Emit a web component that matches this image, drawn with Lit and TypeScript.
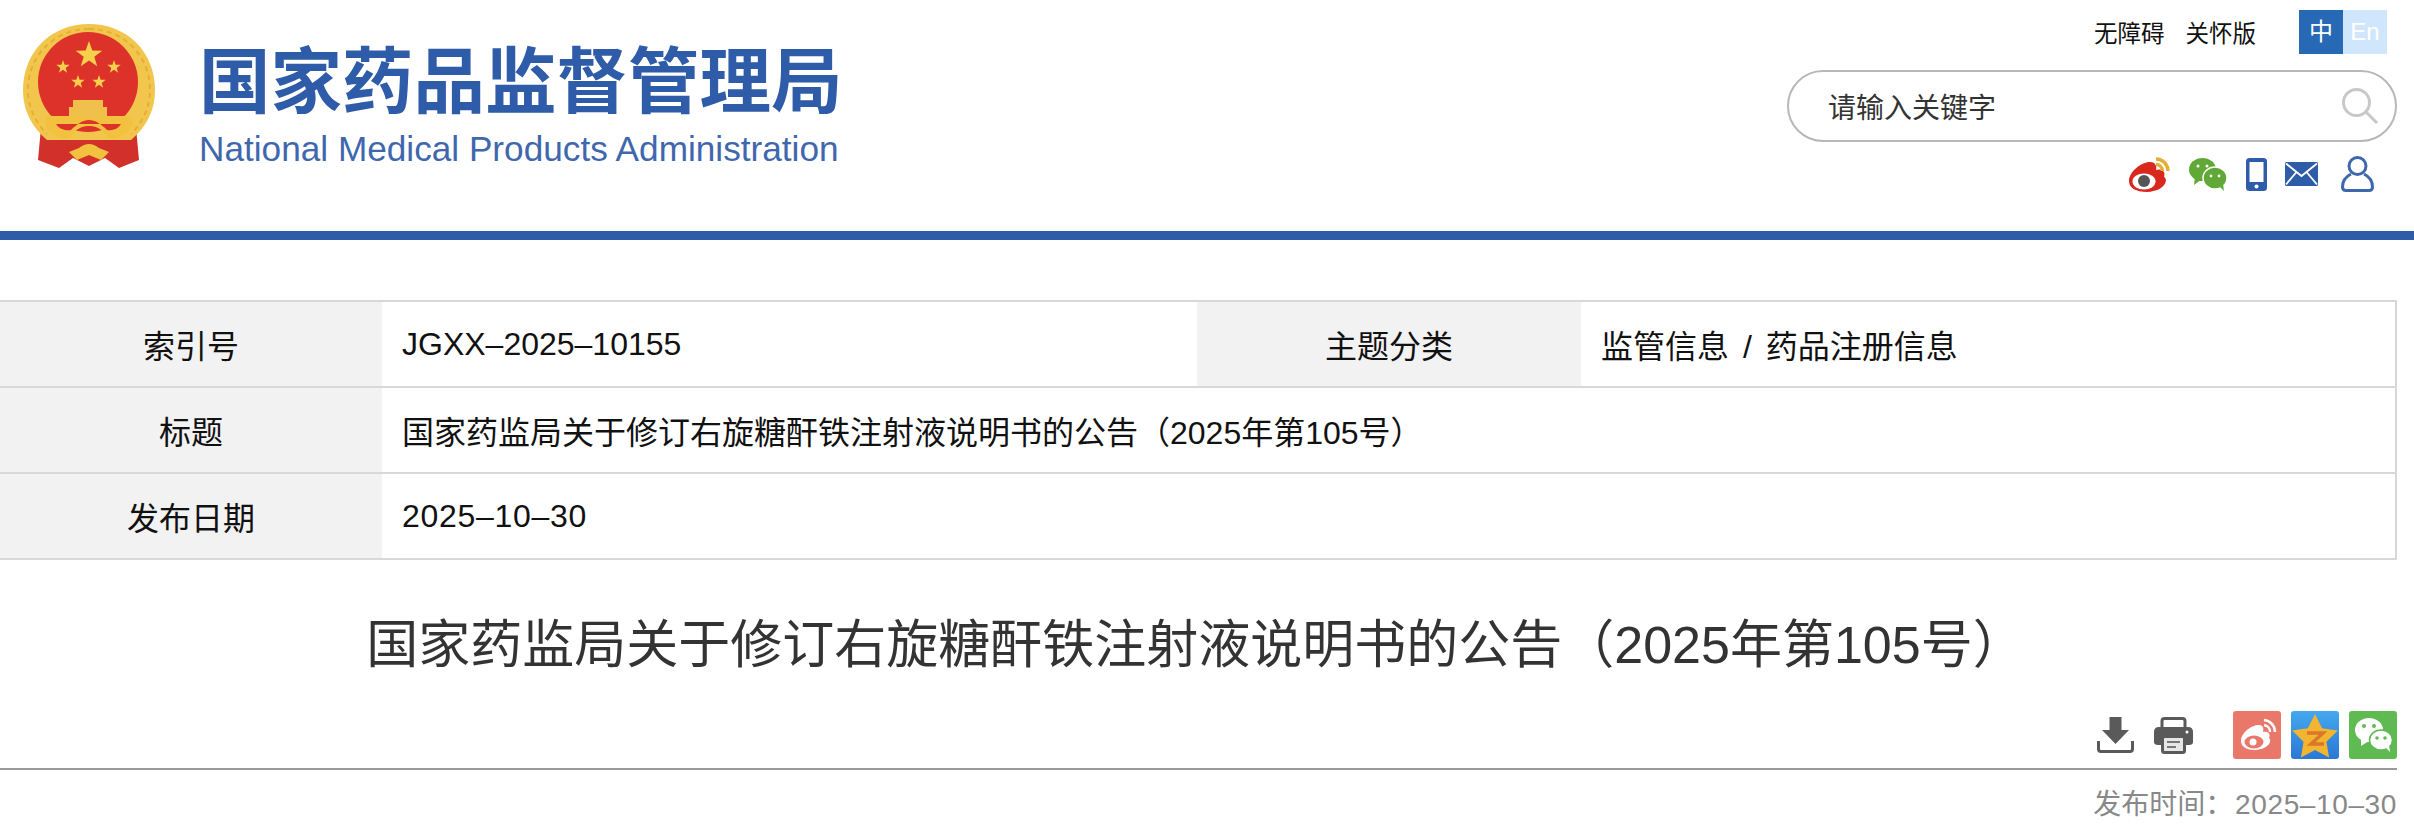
import { LitElement, html, css, svg } from 'lit';
import { customElement } from 'lit/decorators.js';

const star = (cx: number, cy: number, r: number, fill = '#f6d04d', inner = 0.4) => {
  const pts: string[] = [];
  for (let i = 0; i < 10; i++) {
    const rad = i % 2 ? r * inner : r;
    const a = -Math.PI / 2 + (i * Math.PI) / 5;
    pts.push(`${(cx + rad * Math.cos(a)).toFixed(1)},${(cy + rad * Math.sin(a)).toFixed(1)}`);
  }
  return svg`<polygon points=${pts.join(' ')} fill=${fill} />`;
};

const emblem = html`<svg class="emblem" width="132" height="144" viewBox="0 0 132 144">
  <path d="M18 104 L15 136 L36 144 L50 134 L66 142 L82 134 L96 144 L116 136 L113 104 Z" fill="#d2302a" />
  <path d="M66 0 C104 0 132 28 132 66 C132 88 122 104 108 116 H24 C10 104 0 88 0 66 C0 28 28 0 66 0 Z" fill="#f2c64c" />
  <path d="M66 5 C100 5 127 31 127 66 C127 84 119 99 108 110 M66 5 C32 5 5 31 5 66 C5 84 13 99 24 110" fill="none" stroke="#e5ae35" stroke-width="2" stroke-dasharray="5 4" />
  <circle cx="65" cy="58" r="50" fill="#dd3229" />
  ${star(66, 31, 14)} ${star(40, 43, 7)} ${star(91, 43, 7)} ${star(55, 58, 7)} ${star(76, 58, 7)}
  <path d="M50 76 H80 V83 H84 V92 H46 V83 H50 Z" fill="#f0c04c" />
  <path d="M24 92 H108 C112 100 108 108 98 112 C92 116 88 116 84 112 C78 104 72 102 66 102 C60 102 54 104 48 112 C44 116 40 116 34 112 C24 108 20 100 24 92 Z" fill="#f2c13f" />
  <path d="M33 100 H98 C95 105 90 107 84 106 C78 100 72 96 66 96 C60 96 54 100 48 106 C42 107 36 105 33 100 Z" fill="#dd3229" />
  <path d="M46 128 L56 124 Q66 116 76 124 L86 128 L78 136 L66 131 L54 136 Z" fill="#f2c13f" />
</svg>`;

const weibo = html`<svg width="42" height="35" viewBox="0 0 42 35">
  <path d="M0 24 C0 15 12 5 21 5 C27 5 28 10 27 13 C33 11 37 15 35 20 C39 21 38 34 18 35 C7 35 0 31 0 24 Z" fill="#d9281e" />
  <ellipse cx="15" cy="24.500" rx="11.500" ry="8" fill="#fff" />
  <circle cx="15" cy="24" r="6" fill="#555" />
  <path d="M27 2 A12 12 0 0 1 39 14 M27 7.500 A6.500 6.500 0 0 1 33.500 14" fill="none" stroke="#e5ad36" stroke-width="3.400" />
</svg>`;

const wechatGreen = html`<svg width="38" height="33" viewBox="0 0 38 33">
  <ellipse cx="13.500" cy="11.500" rx="13.500" ry="11.500" fill="#61a936" />
  <path d="M6 19 L5 27 L13 21 Z" fill="#61a936" />
  <ellipse cx="26" cy="20" rx="12" ry="11" fill="#61a936" stroke="#fff" stroke-width="1.500" />
  <path d="M31 29 L35 33 L34 26 Z" fill="#61a936" />
  <circle cx="9" cy="8" r="1.500" fill="#fff" /><circle cx="18" cy="8" r="1.500" fill="#fff" />
  <circle cx="22" cy="18" r="1.400" fill="#fff" /><circle cx="30" cy="18" r="1.400" fill="#fff" />
</svg>`;

const phone = html`<svg width="21" height="33" viewBox="0 0 21 33">
  <rect width="21" height="33" rx="3.500" fill="#2f5ca8" />
  <rect x="3.500" y="4" width="14" height="20" fill="#fff" />
  <circle cx="10.500" cy="28.500" r="2" fill="#fff" />
</svg>`;

const mail = html`<svg width="33" height="24" viewBox="0 0 33 24">
  <rect width="33" height="24" rx="1.500" fill="#2f5ca8" />
  <path d="M1 1.500 L16.500 14 L32 1.500 M1 22.500 L11.500 10 M32 22.500 L21.500 10" fill="none" stroke="#fff" stroke-width="1.800" />
</svg>`;

const user = html`<svg width="33" height="36" viewBox="0 0 33 36">
  <circle cx="16.500" cy="10" r="8.500" fill="none" stroke="#3f67ae" stroke-width="3" />
  <path d="M10 18 C4 21 1.500 26 1.500 31 Q1.500 34.500 5 34.500 H28 Q31.500 34.500 31.500 31 C31.500 26 29 21 23 18" fill="none" stroke="#3f67ae" stroke-width="3" />
</svg>`;

const download = html`<svg width="37" height="36" viewBox="0 0 37 36">
  <path d="M12.500 0 H24.500 V13 H32 L18.500 27 L5 13 H12.500 Z" fill="#5a5a5a" />
  <path d="M1.500 24 V32 Q1.500 34.500 4 34.500 H33 Q35.500 34.500 35.500 32 V24" fill="none" stroke="#5a5a5a" stroke-width="3" />
</svg>`;

const printer = html`<svg width="39" height="37" viewBox="0 0 39 37">
  <path d="M8 11 V4 Q8 1.500 10.500 1.500 H28.500 Q31 1.500 31 4 V11" fill="none" stroke="#5a5a5a" stroke-width="3" />
  <path d="M5 10 H34 Q39 10 39 15 V25 Q39 28 35 28 H4 Q0 28 0 25 V15 Q0 10 5 10 Z" fill="#5a5a5a" />
  <rect x="8.500" y="19.500" width="22" height="16" rx="2" fill="#e6e6e6" stroke="#5a5a5a" stroke-width="3" />
  <path d="M13 25 H26 M13 30 H22" stroke="#777" stroke-width="2" />
  <circle cx="33" cy="15" r="1.500" fill="#fff" />
</svg>`;

const shareWeibo = html`<svg width="48" height="48" viewBox="0 0 48 48">
  <rect width="48" height="48" rx="3" fill="#e9786a" />
  <path d="M8 30 C8 22 18 14 26 14 C30 14 31 17 30 21 C35 20 38 23 36 27 C39 29 37 38 22 39 C14 39 8 36 8 30 Z" fill="#fff" />
  <ellipse cx="21" cy="31" rx="9.500" ry="6.500" fill="#e9786a" />
  <circle cx="20" cy="31" r="3.500" fill="#fff" />
  <path d="M31 9 A12 12 0 0 1 42 21 M31 14 A7 7 0 0 1 37 21" fill="none" stroke="#fff" stroke-width="2.500" />
</svg>`;

const shareQzone = html`<svg width="48" height="48" viewBox="0 0 48 48">
  <defs><linearGradient id="qz" x1="0" y1="0" x2="0" y2="1"><stop offset="0" stop-color="#44a8ee" /><stop offset="1" stop-color="#2b77d6" /></linearGradient></defs>
  <rect width="48" height="48" rx="3" fill="url(#qz)" />
  ${star(24, 27, 24, '#f3b52f', 0.5)}
  <path d="M16 22 H32 L20 33 H33" fill="none" stroke="#d9772a" stroke-width="3.500" />
</svg>`;

const shareWechat = html`<svg width="48" height="48" viewBox="0 0 48 48">
  <rect width="48" height="48" rx="3" fill="#5fba52" />
  <ellipse cx="20" cy="19" rx="14" ry="12" fill="#fff" />
  <path d="M12 27 L12 35 L20 30 Z" fill="#fff" />
  <ellipse cx="32" cy="29" rx="11.500" ry="10" fill="#fff" stroke="#5fba52" stroke-width="1.500" />
  <path d="M37 37 L41 41 L40 34 Z" fill="#fff" />
  <circle cx="15" cy="15" r="2" fill="#5fba52" /><circle cx="25" cy="15" r="2" fill="#5fba52" />
  <circle cx="28" cy="27" r="1.800" fill="#5fba52" /><circle cx="36" cy="27" r="1.800" fill="#5fba52" />
</svg>`;

const searchIcon = html`<svg width="38" height="38" viewBox="0 0 38 38">
  <circle cx="15.500" cy="15.500" r="13" fill="none" stroke="#c8c8c8" stroke-width="3" />
  <path d="M25 25 L36 36" stroke="#c8c8c8" stroke-width="3" />
</svg>`;

@customElement('app-root')
export class AppRoot extends LitElement {
  static styles = css`
    :host {
      display: block;
      font-family: "Liberation Sans", "Noto Sans CJK SC", sans-serif;
      color: #333;
      background: #fff;
    }
    .header {
      display: flex;
      justify-content: space-between;
      height: 231px;
      box-sizing: border-box;
      padding-left: 23px;
      padding-right: 17px;
    }
    .brand {
      display: flex;
      gap: 44px;
      padding-top: 24px;
    }
    .brand-text {
      padding-top: 19px;
    }
    .brand-cn {
      font-size: 71.500px;
      line-height: 78px;
      font-weight: 700;
      color: #2f5ca8;
      white-space: nowrap;
    }
    .brand-en {
      font-size: 35.200px;
      line-height: 38px;
      margin-top: 9px;
      color: #3f67ae;
      white-space: nowrap;
    }
    .tools {
      width: 610px;
      padding-top: 10px;
      display: flex;
      flex-direction: column;
      align-items: flex-end;
    }
    .top-links {
      display: flex;
      align-items: center;
      height: 44px;
      margin-right: 10px;
      font-size: 23.500px;
      color: #111;
    }
    .top-links span + span {
      margin-left: 21px;
    }
    .lang {
      display: flex;
      margin-left: 43px;
    }
    .lang b {
      width: 44px;
      height: 44px;
      line-height: 44px;
      text-align: center;
      font-weight: 400;
      font-size: 24px;
      color: #fff;
      background: #2769b4;
    }
    .lang b + b {
      background: #cfe6fc;
    }
    .search {
      box-sizing: border-box;
      width: 610px;
      height: 72px;
      margin-top: 16px;
      border: 2.500px solid #b8b8b8;
      border-radius: 36px;
      display: flex;
      align-items: center;
      justify-content: space-between;
      padding: 0 16px 0 39px;
      font-size: 28px;
      color: #333;
    }
    .social {
      display: flex;
      align-items: center;
      margin-top: 14px;
      margin-right: 23px;
      height: 36px;
    }
    .social svg:nth-child(2) {
      margin-left: 18px;
    }
    .social svg:nth-child(3) {
      margin-left: 19px;
    }
    .social svg:nth-child(4) {
      margin-left: 18px;
    }
    .social svg:nth-child(5) {
      margin-left: 23px;
    }
    .bar {
      height: 9px;
      background: #2f5ca8;
    }
    .meta {
      margin: 60px 17px 0 0;
      border-top: 2px solid #d8d8d8;
      border-right: 2px solid #d8d8d8;
      font-size: 32px;
      color: #111;
    }
    .row {
      display: grid;
      grid-template-columns: 382px 1fr;
      height: 86px;
      box-sizing: border-box;
      border-bottom: 2px solid #d8d8d8;
    }
    .row.four {
      grid-template-columns: 382px 815px 384px 1fr;
    }
    .label,
    .value {
      display: flex;
      align-items: center;
    }
    .label {
      justify-content: center;
      background: #f2f2f2;
    }
    .value {
      padding-left: 20px;
    }
    .value.spaced {
      word-spacing: 5px;
    }
    .num {
      letter-spacing: 0.022em;
    }
    .title {
      margin: 0;
      padding: 50px 23px 0 0;
      text-align: center;
      font-size: 52px;
      line-height: 70px;
      font-weight: 400;
      color: #333;
    }
    .actions {
      display: flex;
      align-items: center;
      justify-content: flex-end;
      margin: 31px 17px 0 0;
      height: 48px;
    }
    .actions .print {
      display: flex;
      margin: 0 40px 0 20px;
    }
    .actions .gap {
      display: flex;
      margin-left: 10px;
    }
    .rule {
      height: 2px;
      margin: 9px 17px 0 0;
      background: #999;
    }
    .date {
      margin: 15px 17px 0 0;
      text-align: right;
      font-size: 28px;
      line-height: 40px;
      word-spacing: -6px;
      color: #888;
    }
  `;

  render() {
    return html`
      <header class="header">
        <div class="brand">
          ${emblem}
          <div class="brand-text">
            <div class="brand-cn">国家药品监督管理局</div>
            <div class="brand-en">National Medical Products Administration</div>
          </div>
        </div>
        <div class="tools">
          <div class="top-links">
            <span>无障碍</span><span>关怀版</span>
            <div class="lang"><b>中</b><b>En</b></div>
          </div>
          <div class="search">请输入关键字 ${searchIcon}</div>
          <div class="social">${weibo}${wechatGreen}${phone}${mail}${user}</div>
        </div>
      </header>
      <div class="bar"></div>
      <section class="meta">
        <div class="row four">
          <div class="label">索引号</div><div class="value">JGXX–2025–10155</div>
          <div class="label">主题分类</div><div class="value spaced">监管信息 / 药品注册信息</div>
        </div>
        <div class="row">
          <div class="label">标题</div><div class="value">国家药监局关于修订右旋糖酐铁注射液说明书的公告（2025年第105号）</div>
        </div>
        <div class="row">
          <div class="label">发布日期</div><div class="value"><span class="num">2025–10–30</span></div>
        </div>
      </section>
      <h1 class="title">国家药监局关于修订右旋糖酐铁注射液说明书的公告（2025年第105号）</h1>
      <div class="actions">
        ${download}<span class="print">${printer}</span>
        ${shareWeibo}<span class="gap">${shareQzone}</span><span class="gap">${shareWechat}</span>
      </div>
      <div class="rule"></div>
      <div class="date">发布时间： <span class="num">2025–10–30</span></div>
    `;
  }
}
